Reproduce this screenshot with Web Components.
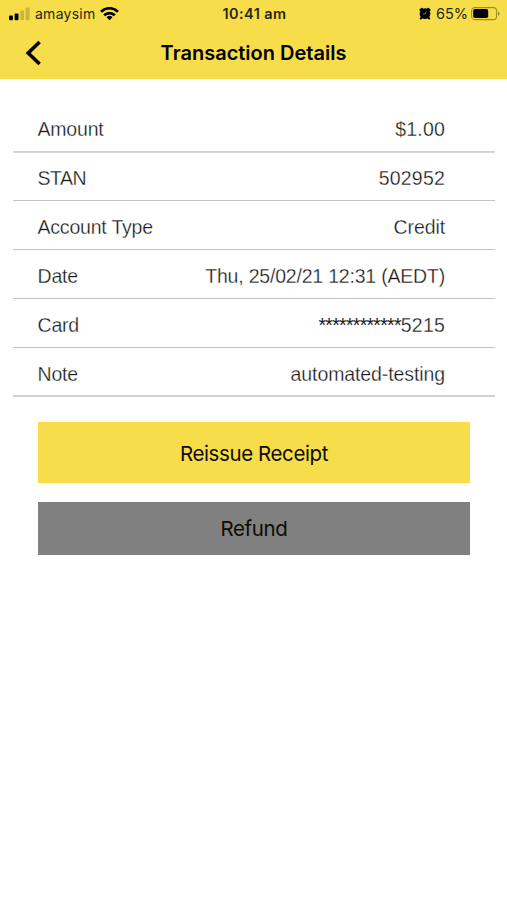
<!DOCTYPE html>
<html lang="en">
<head>
<meta charset="utf-8">
<meta name="viewport" content="width=device-width, initial-scale=1">
<title>Transaction Details</title>
<style>
  body {
    margin: 0;
    background: #fff;
    color: #000;
    font-family: Inter, "Liberation Sans", sans-serif;
  }
</style>
</head>
<body>
<transaction-screen></transaction-screen>

<script>
class StatusBar extends HTMLElement {
  constructor() {
    super();
    this.attachShadow({ mode: 'open' });
    this.shadowRoot.innerHTML = `
      <style>
        :host {
          display: grid;
          grid-template-columns: 1fr auto 1fr;
          align-items: center;
          height: 27px;
          padding: 0 7px 0 9px;
          font-size: 14px;
          line-height: 27px;
          color: #2a270c;
        }
        .left, .right {
          display: flex;
          align-items: center;
        }
        .right {
          justify-content: flex-end;
        }
        .carrier {
          margin: 0 5px 0 5px;
          letter-spacing: 0.25px;
        }
        .time {
          font-size: 14.5px;
          font-weight: 600;
          letter-spacing: 0.4px;
        }
        .percent {
          margin: 0 3px 0 5px;
          font-size: 14.5px;
        }
        svg {
          display: block;
          flex: none;
        }
      </style>
      <div class="left">
        <svg width="21" height="14" viewBox="0 0 21 14">
          <rect x="0" y="8.5" width="3.9" height="4.7" rx="1" fill="#000"/>
          <rect x="5.6" y="6.4" width="3.9" height="6.8" rx="1" fill="#000"/>
          <rect x="11.2" y="3.6" width="3.9" height="9.6" rx="1" fill="#c9b440"/>
          <rect x="16.6" y="0.6" width="3.9" height="12.6" rx="1" fill="#c9b440"/>
        </svg>
        <span class="carrier">amaysim</span>
        <svg width="19" height="14" viewBox="0 0 19 14" fill="none" stroke="#000" stroke-width="2.7">
          <path d="M1 4.7a12.2 12.2 0 0 1 17 0"/>
          <path d="M4.2 8.3a7.6 7.6 0 0 1 10.6 0"/>
          <path d="M9.5 13.2L6.5 10.3a4.3 4.3 0 0 1 6 0z" fill="#000" stroke="none"/>
        </svg>
      </div>
      <span class="time">10:41 am</span>
      <div class="right">
        <svg width="12" height="13" viewBox="0 0 12 13">
          <circle cx="6" cy="6.7" r="5.4" fill="#000"/>
          <path d="M1.4 3L2.9 1.7M10.6 3L9.1 1.7M2.4 10.8L1.8 11.5M9.6 10.8L10.2 11.5" stroke="#000" stroke-width="2" stroke-linecap="round"/>
          <path d="M7.3 4.4L6.2 7H4" fill="none" stroke="#a5943a" stroke-width="0.8"/>
        </svg>
        <span class="percent">65%</span>
        <svg width="29" height="14" viewBox="0 0 29 14">
          <rect x="0.6" y="0.6" width="25" height="12" rx="3.4" fill="none" stroke="#9c8b2e" stroke-width="1.1"/>
          <rect x="2.2" y="2.1" width="15" height="9" rx="1.8" fill="#000"/>
          <path d="M27 4.4c2.2 1 2.2 3.4 0 4.4z" fill="#9c8b2e"/>
        </svg>
      </div>
    `;
  }
}

class NavBar extends HTMLElement {
  constructor() {
    super();
    this.attachShadow({ mode: 'open' });
    this.shadowRoot.innerHTML = `
      <style>
        :host {
          display: grid;
          grid-template-columns: 60px 1fr 60px;
          align-items: center;
          height: 52px;
        }
        button {
          padding: 0 0 0 25px;
          border: 0;
          background: none;
        }
        svg {
          display: block;
        }
        h1 {
          margin: 0;
          font-size: 20px;
          font-weight: 600;
          line-height: 50px;
          text-align: center;
          letter-spacing: 0;
        }
      </style>
      <button aria-label="Back">
        <svg width="17" height="26" viewBox="0 0 17 26" fill="none" stroke="#000" stroke-width="3.6">
          <path d="M14.6 2L3.2 13L14.6 24"/>
        </svg>
      </button>
      <h1><slot></slot></h1>
    `;
  }
}

class DetailRow extends HTMLElement {
  constructor() {
    super();
    this.attachShadow({ mode: 'open' });
    this.shadowRoot.innerHTML = `
      <style>
        :host {
          display: flex;
          justify-content: space-between;
          box-sizing: border-box;
          height: 49px;
          padding: 0 50px 0 24.5px;
          border-bottom: 1px solid #c4c4c4;
          font-family: "Liberation Sans", sans-serif;
          font-size: 19.5px;
          line-height: 52px;
          color: #181818;
          white-space: nowrap;
          /* thins the regular weight down to a light one */
          -webkit-text-stroke: 0.28px #fff;
        }
        :host(:first-child) {
          border-color: #d2d2d2;
          box-shadow: 0 1px #d8d8d8;
        }
        :host(:last-child) {
          border-bottom: 2px solid #d2d2d2;
        }
        .label {
          letter-spacing: var(--label-tracking, -0.2px);
        }
        .value {
          letter-spacing: var(--value-tracking, 0.2px);
        }
        ::slotted(.mask) {
          letter-spacing: -0.73px;
          -webkit-text-stroke: 0;
        }
      </style>
      <span class="label"></span>
      <span class="value"><slot></slot></span>
    `;
  }

  connectedCallback() {
    this.shadowRoot.querySelector('.label').textContent = this.getAttribute('label');
  }
}

class ActionButton extends HTMLElement {
  constructor() {
    super();
    this.attachShadow({ mode: 'open' });
    this.shadowRoot.innerHTML = `
      <style>
        :host {
          display: block;
        }
        button {
          display: block;
          width: 100%;
          height: 61px;
          padding: 2px 0 0;
          border: 0;
          background: #f7dd4a;
          color: #0d0c02;
          font: 400 20.5px/59px Inter, sans-serif;
          letter-spacing: -0.4px;
        }
        :host([kind="secondary"]) button {
          height: 53px;
          padding: 0;
          background: #808080;
          line-height: 53px;
        }
      </style>
      <button><slot></slot></button>
    `;
  }
}

class TransactionScreen extends HTMLElement {
  constructor() {
    super();
    this.attachShadow({ mode: 'open' });
    this.shadowRoot.innerHTML = `
      <style>
        :host {
          display: block;
          min-height: 900px;
        }
        header {
          height: 79px;
          background: #f7dd4a;
        }
        .details {
          padding: 24px 12px 0 13px;
        }
        .actions {
          display: grid;
          gap: 19px;
          padding: 25px 37px 0 38px;
        }
        .stan {
          --label-tracking: -0.5px;
        }
        .text {
          --value-tracking: -0.1px;
        }
        .date {
          --value-tracking: -0.2px;
        }
      </style>
      <header>
        <status-bar></status-bar>
        <nav-bar>Transaction Details</nav-bar>
      </header>
      <section class="details">
        <detail-row label="Amount">$1.00</detail-row>
        <detail-row label="STAN" class="stan">502952</detail-row>
        <detail-row label="Account Type" class="text">Credit</detail-row>
        <detail-row label="Date" class="date">Thu, 25/02/21 12:31 (AEDT)</detail-row>
        <detail-row label="Card"><span class="mask">************</span>5215</detail-row>
        <detail-row label="Note" class="text">automated-testing</detail-row>
      </section>
      <section class="actions">
        <action-button>Reissue Receipt</action-button>
        <action-button kind="secondary">Refund</action-button>
      </section>
    `;
  }
}

customElements.define('status-bar', StatusBar);
customElements.define('nav-bar', NavBar);
customElements.define('detail-row', DetailRow);
customElements.define('action-button', ActionButton);
customElements.define('transaction-screen', TransactionScreen);
</script>
</body>
</html>
